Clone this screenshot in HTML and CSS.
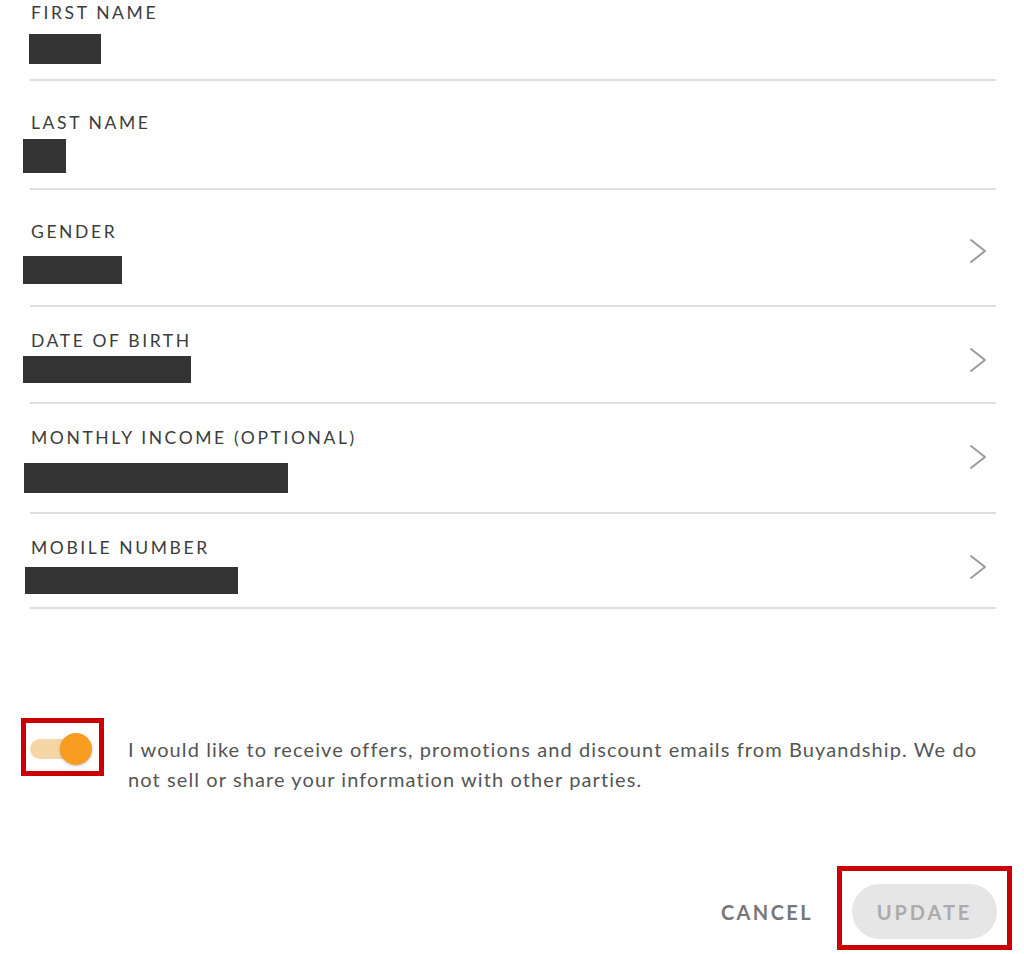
FILE: index.html
```html
<!DOCTYPE html>
<html lang="en">
<head>
<meta charset="utf-8">
<title>Edit Profile</title>
<link rel="stylesheet" href="styles.css">
</head>
<body>
<main class="page">
  <section class="fields">
    <div class="field f1">
      <div class="field-body">
        <div class="label">FIRST NAME</div>
        <div class="redact r1"></div>
      </div>
    </div>
    <div class="field f2">
      <div class="field-body">
        <div class="label">LAST NAME</div>
        <div class="redact r2"></div>
      </div>
    </div>
    <div class="field f3">
      <div class="field-body">
        <div class="label">GENDER</div>
        <div class="redact r3"></div>
      </div>
      <svg class="chev" viewBox="0 0 18 26" aria-hidden="true"><path d="M2 2 L16 13 L2 24" /></svg>
    </div>
    <div class="field f4">
      <div class="field-body">
        <div class="label">DATE OF BIRTH</div>
        <div class="redact r4"></div>
      </div>
      <svg class="chev" viewBox="0 0 18 26" aria-hidden="true"><path d="M2 2 L16 13 L2 24" /></svg>
    </div>
    <div class="field f5">
      <div class="field-body">
        <div class="label">MONTHLY INCOME (OPTIONAL)</div>
        <div class="redact r5"></div>
      </div>
      <svg class="chev" viewBox="0 0 18 26" aria-hidden="true"><path d="M2 2 L16 13 L2 24" /></svg>
    </div>
    <div class="field f6">
      <div class="field-body">
        <div class="label">MOBILE NUMBER</div>
        <div class="redact r6"></div>
      </div>
      <svg class="chev" viewBox="0 0 18 26" aria-hidden="true"><path d="M2 2 L16 13 L2 24" /></svg>
    </div>
  </section>

  <section class="consent">
    <div class="highlight toggle-box">
      <div class="toggle">
        <span class="track"></span>
        <span class="knob"></span>
      </div>
    </div>
    <p class="consent-text">I would like to receive offers, promotions and discount emails from Buyandship. We do not sell or share your information with other parties.</p>
  </section>

  <section class="actions">
    <button class="cancel" type="button">CANCEL</button>
    <div class="highlight update-box">
      <button class="update" type="button">UPDATE</button>
    </div>
  </section>
</main>
</body>
</html>
```

FILE: styles.css
```css
* { box-sizing: border-box; }

html, body {
  margin: 0;
  padding: 0;
  background: #fff;
}

body {
  width: 1024px;
  height: 954px;
  overflow: hidden;
  font-family: "Lato", "Noto Sans", sans-serif;
  color: #3a3a3a;
}

.page {
  display: flex;
  flex-direction: column;
}

.fields {
  padding-left: 30px;
  padding-right: 28px;
}

.field {
  display: flex;
  align-items: flex-start;
  border-bottom: 2px solid #dedede;
}

.field-body {
  flex: 1;
  display: flex;
  flex-direction: column;
  align-items: flex-start;
}

.label {
  font-size: 17.5px;
  line-height: 20px;
  letter-spacing: 2.6px;
  color: #3c3c3c;
  margin-left: 1px;
}

.redact {
  background: #333;
}

.chev {
  width: 18px;
  height: 26px;
  margin-right: 9px;
  margin-top: 16px;
  fill: none;
  stroke: #9a9a9a;
  stroke-width: 2;
  stroke-linecap: round;
  stroke-linejoin: round;
}

/* per-row spacing (matches the captured layout) */
.f1 { padding: 3px 0 15px; }
.f2 { padding: 32px 0 15px; }
.f3 { padding: 32px 0 21px; }
.f4 { padding: 24px 0 19px; }
.f5 { padding: 24px 0 19px; }
.f6 { padding: 24px 0 13px; }

.r1 { width: 72px; height: 30px; margin-top: 11px; margin-left: -1px; }
.r2 { width: 43px; height: 34px; margin-top: 6px;  margin-left: -7px; }
.r3 { width: 99px; height: 28px; margin-top: 14px; margin-left: -7px; }
.r4 { width: 168px; height: 27px; margin-top: 5px; margin-left: -7px; }
.r5 { width: 264px; height: 30px; margin-top: 15px; margin-left: -6px; }
.r6 { width: 213px; height: 27px; margin-top: 9px; margin-left: -5px; }

.highlight {
  border: 5px solid #cc0000;
}

.consent {
  display: flex;
  align-items: flex-start;
  margin-top: 109px;
  padding-left: 21px;
  gap: 24px;
}

.toggle-box {
  padding: 10px 7px 6px 4px;
  flex: none;
}

.toggle {
  position: relative;
  width: 62px;
  height: 32px;
}

.track {
  position: absolute;
  left: 0;
  top: 6px;
  width: 52px;
  height: 20px;
  border-radius: 10px;
  background: #f6d6a6;
}

.knob {
  position: absolute;
  right: 0;
  top: 0;
  width: 32px;
  height: 32px;
  border-radius: 50%;
  background: #f99d22;
  box-shadow: 0 1px 3px rgba(0, 0, 0, 0.25);
}

.consent-text {
  margin: 16px 0 0;
  width: 866px;
  font-family: "Lato", "Noto Sans", sans-serif;
  font-size: 20px;
  letter-spacing: 1.1px;
  line-height: 30px;
  color: #555;
}

.actions {
  display: flex;
  justify-content: flex-end;
  align-items: center;
  margin-top: 72px;
  padding-right: 12px;
  gap: 24px;
}

.cancel,
.update {
  font-family: "Lato", "Noto Sans", sans-serif;
  font-size: 20px;
  font-weight: 700;
  letter-spacing: 2.4px;
  border: none;
  cursor: pointer;
}

.cancel {
  background: none;
  color: #777;
  padding: 0;
  margin-top: 7px;
}

.update-box {
  padding: 13px 10px 6px 10px;
}

.update {
  width: 145px;
  height: 55px;
  border-radius: 28px;
  background: #e6e6e6;
  color: #ababab;
  letter-spacing: 2.9px;
}
```
